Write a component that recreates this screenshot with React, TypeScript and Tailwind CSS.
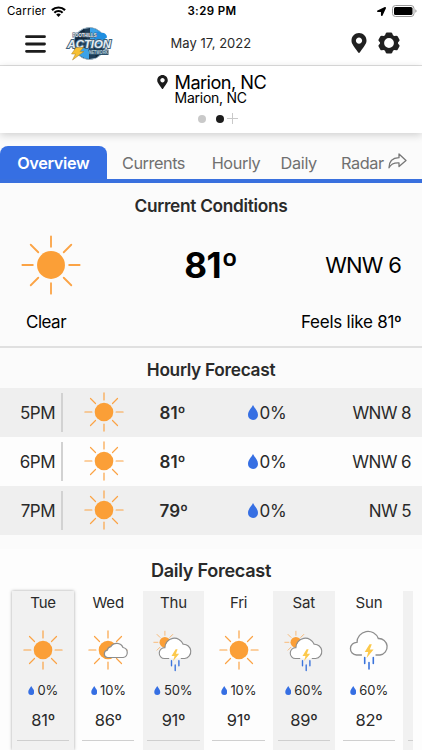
import clsx from "clsx";
import { FaLocationArrow, FaMapMarkerAlt } from "react-icons/fa";

type Sky = "sunny" | "partly" | "sunStorm" | "storm";

const TABS = [
  { label: "Overview", box: "w-[106.5px] tracking-[-0.35px]", active: true },
  { label: "Currents", box: "w-[94px] tracking-[-0.45px]" },
  { label: "Hourly", box: "w-[71px] tracking-[-0.4px]" },
  { label: "Daily", box: "w-[54.5px] tracking-[-0.35px]" },
];

const HOURS = [
  { time: "5PM", temp: 81, rain: 0, wind: "WNW 8" },
  { time: "6PM", temp: 81, rain: 0, wind: "WNW 6" },
  { time: "7PM", temp: 79, rain: 0, wind: "NW 5" },
];

const DAYS: { day: string; sky: Sky; rain: number; temp: number }[] = [
  { day: "Tue", sky: "sunny", rain: 0, temp: 81 },
  { day: "Wed", sky: "partly", rain: 10, temp: 86 },
  { day: "Thu", sky: "sunStorm", rain: 50, temp: 91 },
  { day: "Fri", sky: "sunny", rain: 10, temp: 91 },
  { day: "Sat", sky: "sunStorm", rain: 60, temp: 89 },
  { day: "Sun", sky: "storm", rain: 60, temp: 82 },
];

function SunShape() {
  return (
    <g>
      <circle cx="20" cy="20" r="9.3" fill="#fb9f37" />
      <path
        d="M20 .9v7M20 32.1v7M.9 20h7M32.1 20h7M6.5 6.5l5 5M28.500 28.500l5 5M33.500 6.500l-5 5M11.500 28.500l-5 5"
        stroke="#fba345"
        strokeWidth="1.2"
        strokeLinecap="round"
        fill="none"
      />
    </g>
  );
}

function SunIcon({ className }: { className?: string }) {
  return (
    <svg viewBox="0 0 40 40" className={className}>
      <SunShape />
    </svg>
  );
}

function StormCloud() {
  return (
    <g>
      <path
        d="M13 25H7.5a6.3 6.3 0 0 1-.6-12.5h1.3A11 11 0 0 1 29.3 8.5a8.3 8.3 0 0 1 1.7 16.5H26z"
        fill="#fff"
      />
      <path
        d="M12.5 25H7.5a6.3 6.3 0 0 1 .5-12.6A11 11 0 0 1 29.3 8.5a8.3 8.3 0 0 1 1.700 16.500H27"
        fill="none"
        stroke="#8e8e8e"
        strokeWidth="1.3"
        strokeLinecap="round"
      />
      <path d="M20.5 14.2 15.7 22h3.5l-1.6 6 7-8.6h-3.8l2-5.2z" fill="#fcc94c" />
      <path
        d="M15.7 27.5v6M20 32.5v6.5M24.3 27.5v6"
        stroke="#3b74dc"
        strokeWidth="1.6"
        strokeLinecap="round"
      />
    </g>
  );
}

function SkyIcon({ sky }: { sky: Sky }) {
  return (
    <svg viewBox="0 0 40 40" className="size-10 shrink-0 overflow-visible">
      {sky === "sunny" && <SunShape />}
      {sky === "partly" && (
        <g>
          <SunShape />
          <path
            d="M19.500 27.500a3.700 3.700 0 0 1-.2-7.300 4.600 4.600 0 0 1 3.500-3.500A6.900 6.900 0 0 1 35 17.500a5.100 5.100 0 0 1 .3 10z"
            fill="#fff"
            stroke="#8e8e8e"
            strokeWidth="1.2"
          />
        </g>
      )}
      {sky === "sunStorm" && (
        <g>
          <g transform="translate(.3 .7) scale(.58)">
            <SunShape />
          </g>
          <g transform="translate(5 7) scale(.86)">
            <StormCloud />
          </g>
        </g>
      )}
      {sky === "storm" && <StormCloud />}
    </svg>
  );
}

function Drop({ className }: { className?: string }) {
  return (
    <svg viewBox="0 0 10 15" className={className} fill="#366fe3">
      <path d="M5 0C6.300 3 10 5.800 10 10a5 5 0 0 1-10 0C0 5.800 3.700 3 5 0z" />
    </svg>
  );
}

function Logo() {
  return (
    <svg viewBox="0 0 48 36" className="h-9 w-12 overflow-visible font-['Liberation_Sans']">
      <circle cx="23.5" cy="17.5" r="16" fill="#1d3c57" stroke="#9cb4c4" strokeWidth="1" />
      <path d="M24 2a15.500 15.500 0 0 1 15 15.500L24 19zM23 22v11A15.500 15.500 0 0 1 9 22z" fill="#3ba2e8" />
      <path d="M10 10 18 3l4 13-13 2zM27 20l11 2-8 10z" fill="#12273b" />
      <path d="M28 9.500a4 4 0 0 1 7-2.500 4.500 4.500 0 0 1 6 4.500l-3 2H28z" fill="#1f8ee0" />
      <path d="M22 23.500h20.500v5.500H24z" fill="#2d536d" />
      <text
        x="6.500"
        y="10.800"
        fontSize="5"
        fontWeight="700"
        fill="#e6edf1"
        stroke="#43596b"
        strokeWidth="1"
        paintOrder="stroke"
        textLength="24"
        lengthAdjust="spacingAndGlyphs"
      >
        FOOTHILLS
      </text>
      <text
        x="1.500"
        y="22"
        fontSize="11.500"
        fontWeight="700"
        fontStyle="italic"
        fill="#e4edf2"
        stroke="#3f617a"
        strokeWidth="2"
        paintOrder="stroke"
        textLength="43.500"
        lengthAdjust="spacingAndGlyphs"
      >
        ACTION
      </text>
      <text
        x="23"
        y="28.200"
        fontSize="4.600"
        fontWeight="700"
        fill="#b7cdd9"
        textLength="19"
        lengthAdjust="spacingAndGlyphs"
      >
        NETWORK
      </text>
      <path d="M10 21.500h7.500L14 25.500h4L6.500 34l3-6H5.500z" fill="#f6c033" stroke="#a97d24" strokeWidth=".5" />
    </svg>
  );
}

function StatusBar() {
  return (
    <div className="grid h-[22px] grid-cols-3 items-center pr-[5px] pl-[7px] text-[11.5px] text-black">
      <div className="flex items-center gap-[5px]">
        <span className="pt-px tracking-[0.2px]">Carrier</span>
        <svg viewBox="0 0 16 11.5" className="h-[11px] w-[15px]" fill="none" stroke="#000" strokeWidth="2.3">
          <path d="M1 4.300a10 10 0 0 1 14 0M3.600 7a6.300 6.300 0 0 1 8.800 0" />
          <path d="M8 11.500 5.500 9a3.600 3.600 0 0 1 5 0z" fill="#000" stroke="none" />
        </svg>
      </div>
      <span className="pt-px text-center font-semibold tracking-[0.4px]">3:29 PM</span>
      <div className="flex items-center justify-end gap-[6px]">
        <FaLocationArrow className="size-[9px]" />
        <svg viewBox="0 0 25 12" className="h-3 w-[25px]">
          <rect x=".5" y=".5" width="21.5" height="11" rx="3" fill="none" stroke="#999" />
          <rect x="2" y="2" width="18.5" height="8" rx="1.6" fill="#000" />
          <path d="M23.300 4.200v3.600q1.300-.5 1.300-1.800t-1.300-1.800z" fill="#999" />
        </svg>
      </div>
    </div>
  );
}

function Header() {
  return (
    <header className="flex h-11 items-center border-b border-[#dfdfdf] pr-[22px] pl-[25px]">
      <svg viewBox="0 0 21 18" className="h-[18px] w-[21px]" stroke="#1c1c1c" strokeWidth="2.8" strokeLinecap="round">
        <path d="M1.500 1.700h18M1.500 9h18M1.500 16.300h18" />
      </svg>
      <div className="ml-5">
        <Logo />
      </div>
      <span className="ml-[56.5px] text-[13px] tracking-[0.05px] whitespace-nowrap text-[#2a2a2a]">
        May 17, 2022
      </span>
      <div className="ml-auto flex items-center gap-[11px] pb-[2px] text-[#202020]">
        <FaMapMarkerAlt className="h-5 w-4" />
        <svg viewBox="0 0 22 22" className="size-[22px]">
          <path
            fillRule="evenodd"
            fill="#202020"
            d="M7.800 1.300Q8.100.5 8.900.5h4.200q.8 0 1.100.8l.8 2 1.200.7 2.200-.3q.8 0 1.200.6l1.800 3.200q.4.700 0 1.300L20 10.400v1.200l1.400 1.600q.4.600 0 1.300l-1.800 3.200q-.4.600-1.200.6l-2.200-.3-1.200.7-.8 2q-.3.800-1.100.8H8.900q-.8 0-1.100-.8l-.8-2-1.200-.7-2.200.3q-.8 0-1.200-.6L.6 14.500q-.4-.7 0-1.300L2 11.600v-1.200L.6 8.800q-.4-.6 0-1.300l1.800-3.200q.4-.6 1.200-.6l2.200.3L7 3.300zM11 6.100a4.900 4.900 0 1 0 0 9.800 4.900 4.900 0 0 0 0-9.800z"
          />
        </svg>
      </div>
    </header>
  );
}

function LocationBar() {
  return (
    <section className="h-[67px] bg-white pt-[7px] shadow-[0_2px_8px_rgba(0,0,0,0.18)]">
      <div className="flex pl-[157px]">
        <FaMapMarkerAlt className="mt-[2px] mr-[6.5px] h-[14px] w-[11px] text-[#1c1c1c]" />
        <div className="whitespace-nowrap text-black">
          <div className="text-[18.2px] leading-[18px] tracking-[-0.55px]">Marion, NC</div>
          <div className="text-[14px] leading-[14px] tracking-[-0.25px]">Marion, NC</div>
        </div>
      </div>
      <div className="mt-2 flex items-center pl-[198px]">
        <span className="size-2 rounded-full bg-[#c9c9c9]" />
        <span className="ml-[10px] size-2 rounded-full bg-[#1c1c1c]" />
        <svg viewBox="0 0 11 11" className="ml-[3px] size-[11px]" stroke="#c9c9c9">
          <path d="M5.500 0v11M0 5.500h11" />
        </svg>
      </div>
    </section>
  );
}

function Tabs() {
  return (
    <nav className="mt-[13px] flex h-[37.3px] items-stretch border-b-4 border-[#3970de] text-[16.3px] text-[#707070]">
      {TABS.map((t) => (
        <button
          key={t.label}
          type="button"
          className={clsx(
            "flex items-center justify-center rounded-t-lg pt-[2px]",
            t.box,
            t.active && "bg-[#366fe3] font-semibold text-white",
          )}
        >
          {t.label}
        </button>
      ))}
      <button type="button" className="flex items-center gap-1 pt-[2px] pl-[15px] tracking-[-0.4px]">
        Radar
        <svg
          viewBox="0 0 19 16"
          className="mb-[5px] h-4 w-[19px]"
          fill="none"
          stroke="#777"
          strokeWidth="1.3"
          strokeLinejoin="round"
        >
          <path d="M11 1 18 7.500 11 13.500V10C6 9.700 3 11 1 14.800 1 9 4.500 5 11 4.700z" />
        </svg>
      </button>
    </nav>
  );
}

function CurrentConditions() {
  return (
    <section className="h-[164.7px] border-b-2 border-[#e0e0e0]">
      <h2 className="pt-[11px] text-center text-[17.3px] leading-6 font-semibold tracking-[-0.3px] text-[#2a2a2a]">
        Current Conditions
      </h2>
      <div className="mt-[17px] grid h-[60px] grid-cols-3 items-center pr-[21px] pl-[21px] text-black">
        <SunIcon className="size-[60px]" />
        <span className="text-center text-[35px] font-bold tracking-[-0.4px]">81º</span>
        <span className="text-right text-[22px] tracking-[-0.8px]">WNW 6</span>
      </div>
      <div className="mt-[15px] flex justify-between pr-[20.5px] pl-[26px] text-[17px] text-black">
        <span className="tracking-[-0.5px]">Clear</span>
        <span className="tracking-[-0.25px]">Feels like 81º</span>
      </div>
    </section>
  );
}

function HourlyForecast() {
  return (
    <section>
      <h2 className="h-10 text-center text-[17.3px] leading-[43px] font-semibold tracking-[-0.3px] text-[#2a2a2a]">
        Hourly Forecast
      </h2>
      {HOURS.map((h) => (
        <div
          key={h.time}
          className="flex h-[49px] items-center pr-[11px] text-[17px] text-[#2a2a2a] odd:bg-[#fdfdfd] even:bg-[#efefef]"
        >
          <span className="w-[55px] pt-[2px] text-right tracking-[-0.5px]">{h.time}</span>
          <span className="ml-[6px] h-[39px] w-[1.5px] bg-[#d2d2d2]" />
          <SunIcon className="ml-[21px] size-10" />
          <span className="ml-9 w-[52px] pt-[2px] font-semibold">{h.temp}º</span>
          <Drop className="mt-px ml-9 h-[15px] w-[10px]" />
          <span className="ml-[2px] pt-[2px] tracking-[-0.3px]">{h.rain}%</span>
          <span className="ml-auto pt-[2px] tracking-[-0.6px]">{h.wind}</span>
        </div>
      ))}
    </section>
  );
}

function DailyForecast() {
  return (
    <section className="mt-[14px] h-[201px] bg-[#fdfdfd]">
      <h2 className="h-[42px] text-center text-[18.1px] leading-[43px] font-semibold tracking-[-0.3px] text-[#2a2a2a]">
        Daily Forecast
      </h2>
      <div className="mr-[9px] ml-2 flex h-[159px] gap-[3.7px] overflow-x-clip overflow-y-visible pl-[4.3px]">
        {DAYS.map((d, i) => (
          <div
            key={d.day}
            className={clsx(
              "flex w-[61.5px] shrink-0 flex-col items-center px-[4.5px] text-[#2a2a2a] odd:bg-[#f1f1f1]",
              i === 0 && "shadow-[0_0_3px_rgba(0,0,0,0.35)]",
            )}
          >
            <span className="h-[39px] pt-[2px] text-[15px] leading-5 tracking-[-0.2px]">{d.day}</span>
            <SkyIcon sky={d.sky} />
            <div className="mt-[11px] flex h-[19px] items-center gap-[3px] text-[13px]">
              <Drop className="h-[9px] w-[6.5px]" />
              <span className="pt-px tracking-[-0.1px]">{d.rain}%</span>
            </div>
            <span className="mt-2 h-[32px] text-[16.5px] leading-6 tracking-[-0.3px]">{d.temp}º</span>
            <span className="h-px w-full bg-[#cfcfcf]" />
          </div>
        ))}
        <div className="w-[61.5px] shrink-0 bg-[#f1f1f1] px-[4.5px] pt-[149px]">
          <div className="h-px bg-[#cfcfcf]" />
        </div>
      </div>
    </section>
  );
}

export default function App() {
  return (
    <div className="h-[750px] w-[422px] overflow-hidden bg-[#fbfbfb] font-['Inter',sans-serif]">
      <div className="bg-white">
        <StatusBar />
        <Header />
      </div>
      <LocationBar />
      <Tabs />
      <CurrentConditions />
      <HourlyForecast />
      <DailyForecast />
    </div>
  );
}
